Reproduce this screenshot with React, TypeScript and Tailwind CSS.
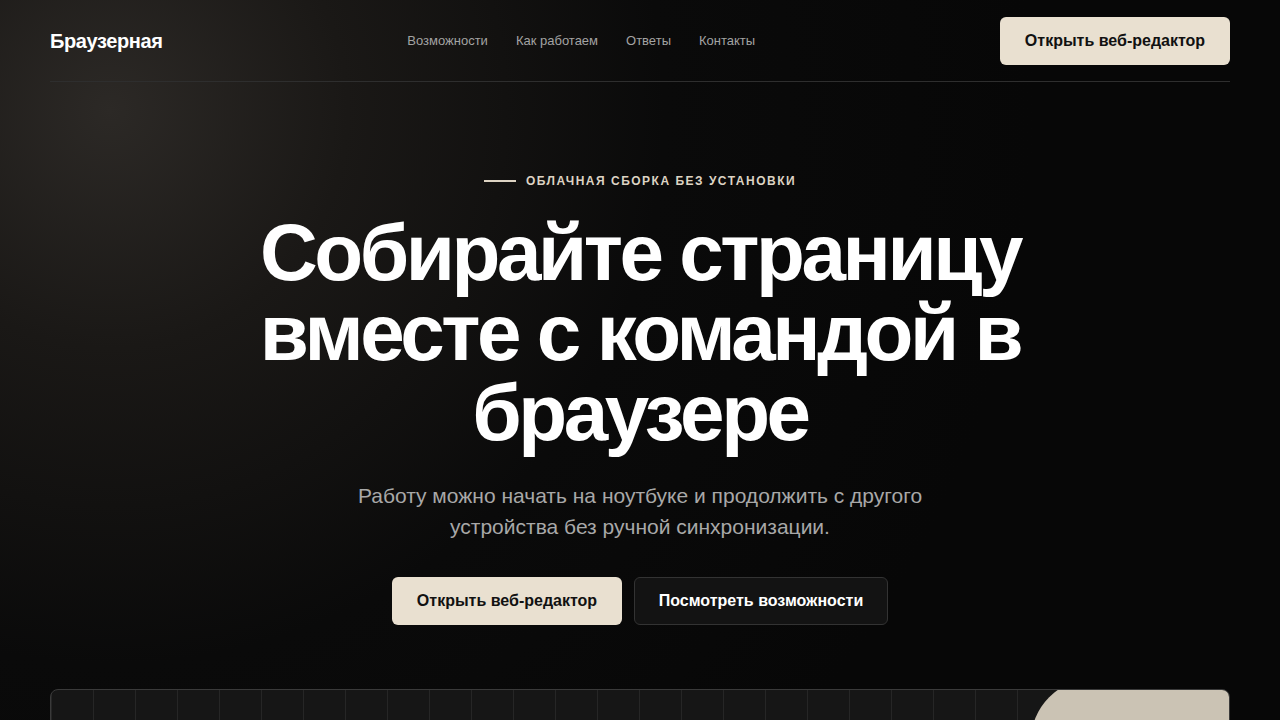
import React from 'react';

const navLinks = ['Возможности', 'Как работаем', 'Ответы', 'Контакты'];

const Header: React.FC = () => (
  <header className="mx-[50px] h-[82px] flex items-center justify-between border-b border-[#2e2e2e]">
    <div className="text-[20px] font-bold text-white tracking-[-0.02em]">Браузерная</div>
    <nav className="flex items-center gap-7 text-[13px] text-[#a3a3a3]">
      {navLinks.map((l) => (
        <a key={l} href="#" className="hover:text-white">
          {l}
        </a>
      ))}
    </nav>
    <button className="w-[230px] h-12 rounded-md bg-[#e9e0d0] text-[16px] font-bold text-[#111]">
      Открыть веб-редактор
    </button>
  </header>
);

const Hero: React.FC = () => (
  <section className="flex flex-col items-center pt-[90px] text-center">
    <div className="flex items-center gap-[10px]">
      <span className="w-8 h-[2px] bg-[#ddd3c3]" />
      <span className="text-[12px] font-bold tracking-[0.125em] text-[#ddd3c3]">ОБЛАЧНАЯ СБОРКА БЕЗ УСТАНОВКИ</span>
    </div>
    <h1 className="mt-[23px] max-w-[820px] text-[80px] leading-[80px] font-bold tracking-[-0.043em] text-white">
      Собирайте страницу вместе с командой в браузере
    </h1>
    <p className="mt-[27px] max-w-[600px] text-[21px] leading-[31px] text-[#a8a8a8]">
      Работу можно начать на ноутбуке и продолжить с другого устройства без ручной синхронизации.
    </p>
    <div className="mt-[35px] flex gap-3">
      <button className="w-[230px] h-12 rounded-md bg-[#e9e0d0] text-[16px] font-bold text-[#111]">
        Открыть веб-редактор
      </button>
      <button className="w-[254px] h-12 rounded-md bg-[#131313] border border-[#333] text-[16px] font-bold text-white">
        Посмотреть возможности
      </button>
    </div>
  </section>
);

const Preview: React.FC = () => (
  <div className="mx-[50px] mt-16 h-[300px] relative overflow-hidden rounded-t-lg border border-[#3a3a3a] bg-[#161616] bg-[linear-gradient(to_right,#262626_1px,transparent_1px)] bg-[size:42px_100%]">
    <div className="absolute left-[980px] top-[-11px] w-[400px] h-[400px] rounded-tl-[62px] bg-[#cbc3b4]" />
  </div>
);

export default function App() {
  return (
    <div
      className="w-full h-[720px] overflow-hidden bg-[#070707] bg-[radial-gradient(circle_at_110px_110px,#2c2926_0%,#1a1816_18%,#0a0a0a_42%,#070707_70%)]"
      style={{ fontFamily: '"Liberation Sans", Arial, sans-serif' }}
    >
      <Header />
      <Hero />
      <Preview />
    </div>
  );
}
